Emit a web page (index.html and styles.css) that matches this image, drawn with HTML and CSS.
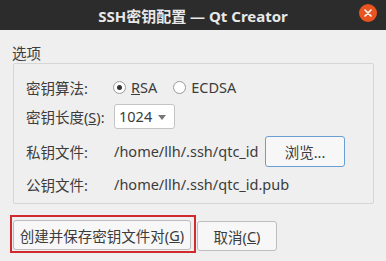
FILE: index.html
```html
<!DOCTYPE html>
<html lang="zh-CN">
<head>
    <meta charset="UTF-8">
    <title>SSH密钥配置 — Qt Creator</title>
    <link rel="stylesheet" href="styles.css">
</head>
<body>
    <div class="window">
        <!-- Title bar -->
        <div class="titlebar">
            <span class="title">SSH密钥配置 — Qt Creator</span>
            <span class="close">
                <svg width="18" height="18" viewBox="0 0 18 18">
                    <circle cx="9" cy="9" r="9" fill="#e95420"/>
                    <path d="M6 6 L12 12 M12 6 L6 12" stroke="#fff" stroke-width="1.6" stroke-linecap="round"/>
                </svg>
            </span>
        </div>

        <div class="content">
            <div class="group-title">选项</div>
            <div class="group">
                <div class="row row-algo">
                    <span class="label">密钥算法:</span>
                    <span class="radio checked"></span><span class="opt"><u>R</u>SA</span>
                    <span class="radio"></span><span class="opt">ECDSA</span>
                </div>
                <div class="row row-size">
                    <span class="label">密钥长度(<u>S</u>):</span>
                    <span class="combo">1024<span class="arrow"></span></span>
                </div>
                <div class="row row-priv">
                    <span class="label">私钥文件:</span>
                    <span class="path">/home/llh/.ssh/qtc_id</span>
                    <span class="btn browse">浏览...</span>
                </div>
                <div class="row row-pub">
                    <span class="label">公钥文件:</span>
                    <span class="path">/home/llh/.ssh/qtc_id.pub</span>
                </div>
            </div>

            <div class="buttons">
                <div class="highlight">
                    <span class="btn create">创建并保存密钥文件对(<u>G</u>)</span>
                </div>
                <span class="btn cancel">取消(<u>C</u>)</span>
            </div>
        </div>
    </div>
</body>
</html>
```

FILE: styles.css
```css
body {
    margin: 0;
    background: #efefef;
    font-family: "Noto Sans", "Noto Sans CJK SC", sans-serif;
    font-size: 14.5px;
    color: #3c3c3c;
}
.window {
    width: 386px;
    height: 261px;
    overflow: hidden;
}
.titlebar {
    height: 30px;
    background: #2c2c2c;
    display: flex;
    align-items: center;
    justify-content: center;
    position: relative;
}
.title {
    color: #e8e8e8;
    font-weight: bold;
    font-size: 15px;
}
.close {
    position: absolute;
    right: 9px;
    top: 4px;
    height: 18px;
}
.content {
    padding: 13px 12px 0 12px;
}
.group-title {
    line-height: 20px;
}
.group {
    border: 1px solid #d6d6d6;
    border-radius: 2px;
    margin-left: 1px;
    height: 139px;
    padding: 0 12px;
}
.row {
    display: flex;
    align-items: center;
}
.label {
    width: 88px;
}
.row-algo { height: 30px; margin-top: 8px; }
.row-size { height: 28px; }
.row-priv { height: 38px; margin-top: 2px; }
.row-pub { height: 28px; }

.radio {
    width: 13px;
    height: 13px;
    border: 1px solid #9a9a9a;
    border-radius: 50%;
    background: #fff;
    box-sizing: border-box;
    margin-right: 5px;
    position: relative;
}
.radio.checked {
    margin-left: -1px;
}
.radio.checked::after {
    content: "";
    position: absolute;
    left: 3px;
    top: 3px;
    width: 5px;
    height: 5px;
    border-radius: 50%;
    background: #333;
}
.opt { margin-right: 16px; }

.combo {
    width: 61px;
    height: 25px;
    box-sizing: border-box;
    border: 1px solid #c4c4c4;
    border-radius: 3px;
    background: #fff;
    display: flex;
    align-items: center;
    padding-left: 4px;
    position: relative;
}
.arrow {
    position: absolute;
    right: 8px;
    top: 10px;
    border-left: 4px solid transparent;
    border-right: 4px solid transparent;
    border-top: 5px solid #777;
}
.path { width: 151px; }

.btn {
    display: flex;
    align-items: center;
    justify-content: center;
    box-sizing: border-box;
    border: 1px solid #bdbdbd;
    border-radius: 3px;
    background: #f7f7f7;
}
.browse {
    width: 80px;
    height: 31px;
    border-color: #6a9fd6;
}
.buttons {
    display: flex;
    align-items: flex-start;
    margin-top: 11px;
    margin-left: -2px;
}
.highlight {
    border: 2px solid #d02a2f;
    padding: 3px 3px 0 1px;
    height: 31px;
}
.create {
    width: 178px;
    height: 30px;
}
.cancel {
    width: 80px;
    height: 30px;
    margin-left: 1px;
    margin-top: 6px;
}
```
